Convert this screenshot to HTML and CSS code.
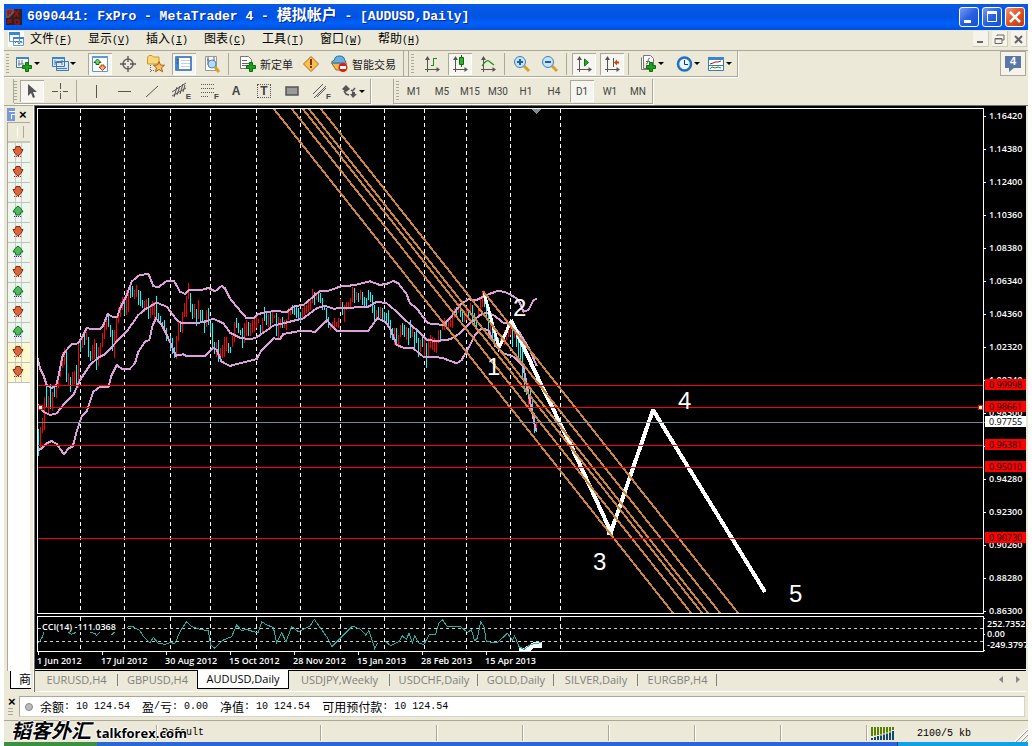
FILE: index.html
```html
<!DOCTYPE html>
<html lang="zh-CN">
<head>
<meta charset="utf-8">
<title>MetaTrader 4</title>
<link rel="stylesheet" href="styles.css">
</head>
<body>
<div class="window">
<header class="titlebar">
  <svg class="app-icon" width="16" height="16" viewBox="0 0 16 16"><path fill="#2a2222" d="M0 0h16v16H0z"/><path fill="#655" d="M0 0h8v4L3 9H0z"/><path stroke="#a01010" stroke-width="1.5" fill="none" d="M2 7V2h4M2 4h3M8 1l5 7M13 1L8 8M2 15v-4h3v2H2M9 15v-4h4v4H9"/></svg>
  <h1>6090441: FxPro - MetaTrader 4 - <span class="cjk">模拟帐户</span> - [AUDUSD,Daily]</h1>
  <div class="win-buttons">
    <button aria-label="最小化"><svg width="18" height="18" viewBox="0 0 18 18"><path fill="#fff" d="M4 12h7v3H4z"/></svg></button>
    <button aria-label="最大化"><svg width="18" height="18" viewBox="0 0 18 18"><path fill="none" stroke="#fff" d="M4.500 4.500h9v9h-9z"/><path fill="#fff" d="M4 3h10v3H4z"/></svg></button>
    <button class="close" aria-label="关闭"><svg width="18" height="18" viewBox="0 0 18 18"><path stroke="#fff" stroke-width="2.500" d="M4 4l10 10M14 4L4 14"/></svg></button>
  </div>
</header>
<nav class="menubar">
  <svg class="menu-icon" width="16" height="16" viewBox="0 0 16 16"><path fill="#fff" d="M0 0h16v16H0z"/><path fill="#fff" stroke="#5b9ad8" d="M1.500 2.500h10v8h-10zM5.500 6.500h10v8h-10z"/><path fill="#3c86cf" d="M1 1h11v3H1zM5 6h11v2H5z"/><path fill="none" stroke="#468" d="M7 12l2-2 2 3 2-3 1 2"/></svg>
  <button>文件<span>(<u>F</u>)</span></button><button>显示<span>(<u>V</u>)</span></button><button>插入<span>(<u>I</u>)</span></button><button>图表<span>(<u>C</u>)</span></button><button>工具<span>(<u>T</u>)</span></button><button>窗口<span>(<u>W</u>)</span></button><button>帮助<span>(<u>H</u>)</span></button>
  <div class="mdi-buttons">
    <button aria-label="最小化图表"><svg width="14" height="14" viewBox="0 0 14 14"><path fill="#666" d="M4 9h6v2H4z"/></svg></button>
    <button aria-label="还原图表"><svg width="14" height="14" viewBox="0 0 14 14"><path fill="none" stroke="#666" d="M5 4V3h7v5h-2M3 6.500h7v5H3zM3 7h7"/></svg></button>
    <button aria-label="关闭图表"><svg width="14" height="14" viewBox="0 0 14 14"><path stroke="#666" stroke-width="2" d="M4 4l7 7M11 4l-7 7"/></svg></button>
  </div>
</nav>

<div class="toolbar first">
  <div class="group">
    <i class="grip"></i>
    <button class="dd" aria-label="新图表"><svg width="17" height="18" viewBox="0 0 17 18"><path fill="#fff" stroke="#3978b5" d="M.5 2.500h12v10H.5z"/><path fill="#3c86cf" d="M0 2h13v2H0z"/><path stroke="#579" d="M3 5v6M2 9h6M6 5v4"/><path fill="#20a020" stroke="#087008" d="M9.500 7.500h3v3h3v3h-3v3h-3v-3h-3v-3h3z"/></svg></button>
    <button class="dd" aria-label="配置文件"><svg width="17" height="18" viewBox="0 0 17 18"><path fill="#d8e8f8" stroke="#3978b5" d="M4.500 6.500h12v9h-12zM.5 2.500h12v9H.5z"/><path fill="#3c86cf" d="M0 2h13v2H0z"/><path stroke="#579" d="M3 5v5M10 5v5M3 7.500h7M4 13.500h11"/></svg></button>
    <i class="gap"></i>
    <button class="tb on" aria-label="市场报价"><svg width="18" height="18" viewBox="0 0 18 18"><path fill="#fff" stroke="#5b9ad8" d="M1.500 1.500h15v15h-15z"/><path fill="#5b9ad8" d="M1 1h16v2H1z"/><path fill="#7fd07f" stroke="#087008" d="M6.500 4l3.500 3.500H8v2H5v-2H3z"/><path fill="#ffb070" stroke="#c03810" d="M11.500 15.500L15 12h-2v-2h-3v2H8z"/></svg></button>
    <button class="tb" aria-label="数据窗口"><svg width="18" height="18" viewBox="0 0 18 18"><circle cx="9" cy="9" r="5" fill="none" stroke="#666" stroke-width="1.500"/><path stroke="#555" stroke-width="1.300" d="M9 1v6M9 11v6M1 9h6M11 9h6"/></svg></button>
    <button class="tb" aria-label="导航"><svg width="18" height="18" viewBox="0 0 18 18"><path fill="#f8d878" stroke="#c89830" d="M.5 3.500V2L2 .5h3L6.500 2H12v7H.5z"/><path stroke="#666" stroke-dasharray="1 1" d="M3.500 10v7M4 15.500h4"/><path fill="#ffc060" stroke="#a06020" d="M12 6.500l1.500 3.500 4 .3-3 2.500 1 4L12 14.500l-3.500 2.300 1-4-3-2.500 4-.3z"/></svg></button>
    <button class="tb on" aria-label="终端"><svg width="18" height="18" viewBox="0 0 18 18"><path fill="#fff" stroke="#2860a8" stroke-width="1.500" d="M1 2h15v13H1z"/><path fill="#3c86cf" d="M1 2h3v13H1z"/><path stroke="#235" d="M2 5h1M2 8h1"/><path stroke="#b8d0f0" d="M6 5.500h9M6 8.500h9M6 11.500h9"/></svg></button>
    <button class="tb" aria-label="策略测试"><svg width="18" height="18" viewBox="0 0 18 18"><path fill="#fff" stroke="#999" d="M2.500 1.500h11v14h-11z"/><path stroke="#555" d="M5 2v8M4 5h2M11 2v5"/><circle cx="9" cy="9" r="4" fill="#b8daf5" stroke="#4888c0"/><path stroke="#d8a030" stroke-width="3" d="M12 12l4 5"/></svg></button>
    <i class="sep"></i>
    <button class="tb text" aria-label="新定单"><svg width="18" height="18" viewBox="0 0 18 18"><path fill="#fff" stroke="#777" d="M1.500 1.500h8l3 3v9h-11z"/><path stroke="#666" d="M3 5.500h5M3 8.500h7M3 10.500h5"/><path fill="#20a020" stroke="#087008" d="M10.500 7.500h3v3h3v3h-3v3h-3v-3h-3v-3h3z"/></svg>新定单</button>
    <button class="tb" aria-label="编辑器"><svg width="18" height="18" viewBox="0 0 18 18"><path fill="#f8c050" stroke="#b06820" d="M9 1.500L16.500 9 9 16.500 1.500 9z"/><path fill="#803010" d="M8 4h2v6H8zM8 11h2v2H8z"/></svg></button>
    <button class="tb text" aria-label="智能交易"><svg width="18" height="18" viewBox="0 0 18 18"><path fill="#f0b850" stroke="#a07020" d="M1.500 8h15L13 15H6z"/><path fill="#68aee0" stroke="#2870a8" d="M4.500 5q0-4 5-4t5 4q3 2 0 3h-10q-6 0 0-3z"/><circle cx="13" cy="12.500" r="4.500" fill="#d82010"/><path fill="#fff" d="M10 11h6v3h-6z"/></svg><span class="text-gap">智能交易</span></button>
    <i class="sep double"></i><i class="grip"></i>
    <button class="tb" aria-label="柱状图"><svg width="18" height="18" viewBox="0 0 18 18"><path class="axes" d="M4.500 3v14M2 14.500h14"/><path class="heads" d="M4.500 1l2.500 4H2zM17 14.500L13.500 12v5z"/><path class="crisp" stroke="#189018" d="M10.500 3v8M8 10.500h3M10 3.500h4"/></svg></button>
    <button class="tb on" aria-label="蜡烛图"><svg width="18" height="18" viewBox="0 0 18 18"><path class="axes" d="M4.500 3v14M2 14.500h14"/><path class="heads" d="M4.500 1l2.500 4H2zM17 14.500L13.500 12v5z"/><path stroke="#107010" d="M10.500 0v12"/><path fill="#30b030" stroke="#107010" d="M8.500 2.500h4v7h-4z"/></svg></button>
    <button class="tb" aria-label="折线图"><svg width="18" height="18" viewBox="0 0 18 18"><path class="axes" d="M4.500 3v14M2 14.500h14"/><path class="heads" d="M4.500 1l2.500 4H2zM17 14.500L13.500 12v5z"/><path fill="none" stroke="#189018" stroke-width="1.200" d="M3 11q5-8 8-4l4 3"/></svg></button>
    <i class="sep narrow"></i>
    <button class="tb" aria-label="放大"><svg width="18" height="18" viewBox="0 0 18 18"><path stroke="#d8a030" stroke-width="3" d="M11 11l5 5"/><circle cx="7" cy="7" r="5.500" fill="#c8e4fa" stroke="#3880c0"/><path stroke="#2060a0" stroke-width="2" d="M4 7h6M7 4v6"/></svg></button>
    <button class="tb" aria-label="缩小"><svg width="18" height="18" viewBox="0 0 18 18"><path stroke="#d8a030" stroke-width="3" d="M11 11l5 5"/><circle cx="7" cy="7" r="5.500" fill="#c8e4fa" stroke="#3880c0"/><path stroke="#2060a0" stroke-width="2" d="M4 7h6"/></svg></button>
    <i class="sep narrow"></i>
    <button class="tb on" aria-label="自动滚动"><svg width="18" height="18" viewBox="0 0 18 18"><path class="axes" d="M4.500 3v14M2 14.500h14"/><path class="heads" d="M4.500 1l2.500 4H2zM17 14.500L13.500 12v5z"/><path fill="#20b020" stroke="#107010" d="M9.500 4l4 3.500-4 3.500z"/></svg></button>
    <button class="tb on" aria-label="图表平移"><svg width="18" height="18" viewBox="0 0 18 18"><path class="axes" d="M4.500 3v14M2 14.500h14M10.500 3v9"/><path class="heads" d="M4.500 1l2.500 4H2zM17 14.500L13.500 12v5z"/><path fill="#c04010" d="M11 7.500l3-3v2h2v2h-2v2z"/></svg></button>
    <i class="sep narrow"></i><i class="gap"></i>
    <button class="dd" aria-label="指标"><svg width="17" height="18" viewBox="0 0 17 18"><path fill="#fff" stroke="#777" d="M3.500.500h7l3 3v10h-10zM1.500 2.500v12h9"/><path fill="none" stroke="#666" d="M6 9q2 0 2-3t2-3M6 6.500h4"/><path fill="#20a020" stroke="#087008" d="M9.500 7.500h3v3h3v3h-3v3h-3v-3h-3v-3h3z"/></svg></button>
    <button class="dd last" aria-label="周期"><svg width="17" height="18" viewBox="0 0 17 18"><circle cx="8.500" cy="9" r="6.500" fill="#e8f4ff" stroke="#2070c0" stroke-width="2.500"/><path fill="none" stroke="#235" d="M8.500 5v4.500H12"/></svg></button>
    <button class="dd last" aria-label="模板"><svg width="17" height="18" viewBox="0 0 17 18"><path fill="#fff" stroke="#3978b5" d="M.5 2.500h15v13H.5z"/><path fill="#3c86cf" d="M0 2h16v3H0z"/><path fill="none" stroke="#a02010" d="M2 9l3-1 2-1h3l3-1"/><path stroke="#3978b5" d="M1 10.500h14"/><path fill="none" stroke="#209020" d="M2 14l2-2 3 1 3-1 3 1"/></svg></button>
  </div>
  <button class="chat" aria-label="消息 4"><svg width="16" height="18" viewBox="0 0 16 18"><path fill="#5878a8" d="M0 1h16v12H9l-5 4v-4H0z"/></svg><b>4</b></button>
</div>

<div class="toolbar second">
  <i class="spacer"></i>
  <div class="group">
    <i class="grip short"></i>
    <button class="tb on" aria-label="光标"><svg width="18" height="18" viewBox="0 0 18 18"><path fill="#555" d="M5 2v12l3-3 2 5 2-1-2-5h4z"/></svg></button>
    <button class="tb" aria-label="十字准线"><svg width="18" height="18" viewBox="0 0 18 18"><path stroke="#555" d="M9.500 1v6M9.500 11v6M1 9.500h6M12 9.500h5M9 9.500h1"/></svg></button>
    <i class="sep"></i>
    <button class="tb" aria-label="垂直线"><svg width="18" height="18" viewBox="0 0 18 18"><path stroke="#555" d="M9.500 3v13"/></svg></button>
    <button class="tb" aria-label="水平线"><svg width="18" height="18" viewBox="0 0 18 18"><path stroke="#555" d="M3 9.500h13"/></svg></button>
    <button class="tb" aria-label="趋势线"><svg width="18" height="18" viewBox="0 0 18 18"><path stroke="#555" d="M3 15L15 4"/></svg></button>
    <button class="tb lettered" aria-label="等距通道"><svg width="18" height="18" viewBox="0 0 18 18"><path stroke="#555" d="M1 10L15 1M1 14L15 6M3 15l3-10M6 13l3-9M9 12l3-10M12 10l2-7"/></svg><small>E</small></button>
    <button class="tb lettered" aria-label="斐波那契"><svg width="18" height="18" viewBox="0 0 18 18"><path stroke="#555" stroke-dasharray="1 1" d="M2 2.500h14M2 6.500h14M2 10.500h14M2 14.500h8"/></svg><small>F</small></button>
    <button class="tb letter">A</button>
    <button class="tb letter boxed"><span>T</span></button>
    <button class="tb" aria-label="矩形"><svg width="18" height="18" viewBox="0 0 18 18"><path fill="#999" stroke="#555" stroke-width="1.500" d="M3 5h12v8H3z"/></svg></button>
    <button class="tb lettered" aria-label="斐波通道"><svg width="18" height="18" viewBox="0 0 18 18"><path stroke="#555" d="M2 12L12 2M3 16L15 4M6 15l9-9"/></svg><small>F</small></button>
    <i class="gap"></i>
    <button class="dd last" aria-label="箭头"><svg width="17" height="18" viewBox="0 0 17 18"><path fill="#555" d="M5 3l4 4-4 3-4-3zM12 16l4-4h-2v-2h-3v2H9z"/><path fill="none" stroke="#555" stroke-width="1.500" d="M10 8l1.500 1L14 6M3 9l2 3 3 1"/></svg></button>
  </div>
  <i class="divider"></i>
  <div class="group times">
    <i class="grip"></i>
    <button class="tb">M1</button><button class="tb">M5</button><button class="tb">M15</button><button class="tb">M30</button><button class="tb">H1</button><button class="tb">H4</button><button class="tb on">D1</button><button class="tb">W1</button><button class="tb">MN</button>
  </div>
</div>

<div class="workspace">
  <aside class="market">
    <div class="market-head"><svg width="8" height="13" viewBox="0 0 8 13"><path fill="#7898d8" d="M0 0h8v13H0z"/><path fill="none" stroke="#fff" d="M2 3.500h6M4.500 6v5M5 6.500h3"/></svg><button aria-label="关闭市场报价">×</button></div>
    <div class="market-list">
      <div class="market-cols"></div>
      <div class="quotes" id="quotes"></div>
    </div>
    <button class="market-tab">商</button>
  </aside>
  <main class="chart-column">
    <svg class="chart" viewBox="35 106 991 563" role="img" aria-label="AUDUSD,Daily">
      <path fill="#000" d="M35 106h991v563H35z"/>
      <g class="crisp" fill="none">
        <path stroke="#fff" stroke-dasharray="4 3" d="M80.500 109V613M124.500 109V613M170.500 109V613M210.500 109V613M256.500 109V613M300.500 109V613M340.500 109V613M384.500 109V613M424.500 109V613M466.500 109V613M510.500 109V613M560.500 109V613M80.500 617V651M124.500 617V651M170.500 617V651M210.500 617V651M256.500 617V651M300.500 617V651M340.500 617V651M384.500 617V651M424.500 617V651M466.500 617V651M510.500 617V651M560.500 617V651"/>
        <path stroke="#ccc" stroke-dasharray="3 3" d="M38 628.500H983M38 641.500H983"/>
        <g transform="translate(30 260) scale(.33333)">
          <path class="thin" id="up" stroke="#f00"/>
          <path class="thin" id="down" stroke="#0ff"/>
          <g class="bands">
            <path d="M22 292L30 325 40 345 50 375 65 384 78 378 85 350 97 290 105 275 125 253 145 250 160 225 170 205 208 208 218 200 233 162 250 172 262 170 270 145 290 105 305 65 325 47 355 41 370 78 385 82 410 63 432 63 450 95 465 102 478 90 515 90 535 84 555 94 575 78 585 85 600 115 620 140 650 175 670 175 685 162 710 156 735 153 770 156 795 138 820 135 850 110 870 93 890 94 930 80 975 75 1020 64 1050 75 1075 70 1090 63 1105 70 1130 103 1140 130 1160 145 1180 172 1195 190 1240 195 1260 175 1290 135 1315 118 1340 120 1370 105 1405 92 1430 98 1460 115 1470 130 1480 155 1495 150 1510 122 1520 115"/>
            <path d="M22 432L40 455 60 465 80 460 100 435 130 405 150 360 180 315 205 293 225 283 260 245 290 215 325 165 345 148 380 128 410 140 425 160 440 180 455 190 520 187 550 176 580 190 600 218 630 233 660 238 680 232 730 197 780 185 820 175 860 145 885 137 910 146 1015 140 1040 125 1070 130 1100 155 1120 175 1160 210 1190 240 1220 243 1260 238 1290 220 1320 190 1350 165 1370 158 1390 165 1420 188 1450 195 1470 220 1500 270 1520 318"/>
            <path d="M22 572L35 565 50 550 65 543 80 552 102 583 115 565 128 560 140 515 155 470 170 455 190 395 210 380 235 382 245 345 260 315 275 326 300 326 315 310 325 275 345 245 358 240 368 195 378 175 395 195 415 235 438 287 460 283 470 288 525 287 550 263 560 270 575 305 600 318 620 312 680 297 695 270 730 235 750 237 760 222 810 213 855 215 890 180 920 212 1015 212 1042 175 1065 185 1080 205 1100 255 1125 265 1150 265 1180 290 1235 293 1280 310 1295 300 1320 255 1335 225 1355 205 1375 210 1395 255 1420 280 1450 290 1480 320 1495 400 1515 500 1520 515"/>
          </g>
        </g>
        <path stroke="#fff" stroke-width="3" d="M484 293L492 322 499 348 511 321"/>
        <path stroke="#fff" stroke-width="4" stroke-linejoin="bevel" d="M511 320L538 378 574 452 611 532 653 410 765 592"/>
        <path stroke="#fff" stroke-width="4" d="M607 533h6"/>
        <path stroke="#cd853f" stroke-width="2" d="M274 109L673 613M292 109L691 613M303 109L702 613M309 109L708 613M321 109L720 613M483 291L738 613"/>
        <path stroke="#f00" d="M38 385.500H983M38 407.500H983M38 445.500H983M38 467.500H983M38 538.500H983"/>
        <path stroke="#778899" d="M38 422.500H985"/>
        <path fill="#fff" stroke="#f00" d="M38.500 405.500h4v4h-4zM978.500 405.500h4v4h-4z"/>
        <path fill="#fff" d="M519 648h5l10-6h8v6h-8l-4 3h-11z"/>
        <g transform="translate(0 600) scale(.33333)" stroke="#20b2aa">
          <path class="thin" d="M115 130L125 115 132 97M205 97L215 103 228 97M270 97L285 100 290 107 300 95M335 105L345 95M380 82L395 78 420 92 430 110 450 128 460 112 475 130 495 133 510 128 525 130 540 95 560 65 575 80 600 88 625 92 632 135 643 145 670 120 695 110 710 75 725 92 740 88 760 95 775 98 785 65 800 75 820 82 830 128 845 98 858 125 875 80 895 95 915 85 930 78 943 58 960 82 980 110 995 140 1015 120 1032 103 1057 78 1082 88 1097 105 1107 92 1124 145 1134 128M1154 122L1172 137 1197 125 1207 108 1219 118 1227 100 1237 130 1244 108 1257 130 1272 133 1287 105 1307 102 1317 68 1328 60 1342 80 1382 80 1402 97 1414 90 1424 122 1432 115 1442 65 1452 80 1459 125 1492 128 1522 100 1537 120 1544 108 1557 140 1572 148 1592 133 1622 128"/>
        </g>
        <path stroke="#fff" d="M37.500 108.500H983.500V613.500H37.500zM37.500 616.500H983.500V651.500H37.500zM984 116.500h2M984 149.500h2M984 182.500h2M984 215.500h2M984 248.500h2M984 281.500h2M984 314.500h2M984 347.500h2M984 380.500h2M984 413.500h2M984 446.500h2M984 479.500h2M984 512.500h2M984 545.500h2M984 578.500h2M984 611.500h2M984 618.500h1M984 634.500h1M984 650.500h1M38.500 652v3M102.500 652v3M166.500 652v3M230.500 652v3M294.500 652v3M358.500 652v3M422.500 652v3M486.500 652v3"/>
        <path fill="#808890" d="M532 109h9l-4.500 5z"/>
      </g>
      <g class="wave"><text x="487" y="375">1</text><text x="513" y="316">2</text><text x="593" y="570">3</text><text x="678" y="409">4</text><text x="789" y="602">5</text></g>
      <g class="axis">
        <text x="989" y="119">1.16420</text><text x="989" y="152">1.14380</text><text x="989" y="185">1.12400</text><text x="989" y="218">1.10360</text><text x="989" y="251">1.08380</text><text x="989" y="284">1.06340</text><text x="989" y="317">1.04360</text><text x="989" y="350">1.02320</text><text x="989" y="383">1.00340</text><text x="989" y="416">0.98300</text><text x="989" y="482">0.94280</text><text x="989" y="515">0.92300</text><text x="989" y="548">0.90260</text><text x="989" y="581">0.88280</text><text x="989" y="614">0.86300</text>
        <text x="987" y="627">252.7352</text><text x="987" y="637">0.00</text><text x="987" y="648">-249.3797</text>
        <text x="37" y="664">1 Jun 2012</text><text x="101" y="664">17 Jul 2012</text><text x="165" y="664">30 Aug 2012</text><text x="229" y="664">15 Oct 2012</text><text x="293" y="664">28 Nov 2012</text><text x="357" y="664">15 Jan 2013</text><text x="421" y="664">28 Feb 2013</text><text x="485" y="664">15 Apr 2013</text>
        <path fill="#000" d="M41 621h80v11H41z"/><text x="42" y="630">CCI(14) -111.0368</text>
      </g>
      <path fill="#f00" d="M985 379h41v11h-41zM985 401h41v11h-41zM985 439h41v11h-41zM985 461h41v11h-41zM985 532h41v11h-41z"/>
      <path fill="#fff" d="M985 416h41v11h-41z"/>
      <g class="axis tags"><text x="989" y="388">0.99998</text><text x="989" y="410">0.98661</text><text x="989" y="425">0.97755</text><text x="989" y="448">0.96381</text><text x="989" y="470">0.95010</text><text x="989" y="541">0.90730</text></g>
    </svg>
    <nav class="tabs">
      <button>EURUSD,H4</button><button>GBPUSD,H4</button><button class="active">AUDUSD,Daily</button><button>USDJPY,Weekly</button><button>USDCHF,Daily</button><button>GOLD,Daily</button><button>SILVER,Daily</button><button>EURGBP,H4</button>
      <span class="tab-scroll"><button aria-label="向左"><svg width="5" height="8" viewBox="0 0 5 8"><path fill="#888" d="M4 0v7L0 3.500z"/></svg></button><button aria-label="向右"><svg width="5" height="8" viewBox="0 0 5 8"><path fill="#888" d="M0 0v7l4-3.500z"/></svg></button></span>
    </nav>
  </main>
</div>

<section class="terminal">
  <div class="terminal-side"><button aria-label="关闭终端">×</button><i></i></div>
  <p><i class="dot"></i>余额<span>: 10 124.54&nbsp; </span>盈<span>/</span>亏<span>: 0.00&nbsp; </span>净值<span>: 10 124.54&nbsp; </span>可用预付款<span>: 10 124.54</span></p>
</section>

<footer class="status">
  <div class="help"><span class="brand"><em>韬客外汇</em>talkforex.com</span></div><div class="profile">Default</div><div class="wide"></div><div></div><div></div><div></div><div></div><div></div>
  <div class="net"><svg width="24" height="13" viewBox="0 0 24 13"><path stroke="#5a8000" stroke-width="2" d="M1 0v9M4 0v8.500M7 0v8M10 0v7.500M13 0v6.500M16 0v5.500M19 0v4.500M22 0v3"/><path stroke="#104870" stroke-width="2" d="M1 11v2M4 10v3M7 9v4M10 8.500V13M13 7.500V13M16 6.500V13M19 5.500V13M22 4v9"/></svg><span>2100/5 kb</span></div>
  <svg class="resize" width="14" height="14" viewBox="0 0 14 14"><path stroke="#fff" stroke-width="2" d="M1 14L14 1M6 14l8-8M11 14l3-3"/><path stroke="#999" d="M2 14L14 2M7 14l7-7M12 14l2-2"/></svg>
</footer>
<div class="taskbar"><i class="start"></i><i class="tasks"></i><i class="tray"></i></div>
</div>
<script src="chart.js"></script>
</body>
</html>
```

FILE: styles.css
```css
* { box-sizing: border-box; }
body { margin: 0; background: #fdfffc; font-family: "Liberation Sans", "Noto Sans CJK SC", sans-serif; font-size: 12px; color: #000; }
button { margin: 0; padding: 0; border: 0; background: none; font: inherit; color: inherit; }
svg { display: block; flex: none; }
i { font-style: normal; flex: none; }
.window { margin: 4px 4px 0; background: #ece9d8; }

.titlebar { display: flex; align-items: center; height: 26px; padding: 0 3px 0 2px; gap: 5px; background: linear-gradient(#0a5ae8, #0054e3 50%, #0060fc 75%, #0050d8); }
.titlebar h1 { flex: 1; margin: 0; color: #fff; font: bold 13px/20px "Liberation Mono", "Noto Sans CJK SC", monospace; text-shadow: 1px 1px #0a2a80; white-space: pre; }
.cjk { font-size: 15px; line-height: 1; }
.win-buttons { display: flex; gap: 3px; }
.win-buttons button { width: 20px; height: 20px; border: 1px solid #fff; border-radius: 3px; background: linear-gradient(135deg, #7a9cf0, #2860e0 50%, #1a50c8); }
.win-buttons .close { background: linear-gradient(135deg, #f09878, #e05020 50%, #c03c10); }

.menubar { display: flex; align-items: center; height: 21px; padding: 0 1px 2px 4px; border-bottom: 1px solid #aca899; font-family: "Liberation Sans", "Noto Sans CJK SC", sans-serif; }
.menu-icon { margin-right: 6px; }
.menubar > button { width: 58px; text-align: left; line-height: 18px; white-space: nowrap; }
.menubar > button span { font: 10px "Liberation Mono", monospace; }
.mdi-buttons { display: flex; gap: 3px; margin-left: auto; }
.mdi-buttons button { width: 16px; height: 16px; background: #f5f3ea; border-right: 1px solid #d0ccbc; border-bottom: 1px solid #d0ccbc; }

.toolbar { display: flex; }
.toolbar.first { height: 28px; justify-content: space-between; padding-right: 2px; }
.toolbar.second { height: 26px; }
.group { display: flex; align-items: center; border-right: 1px solid #aca899; border-bottom: 1px solid #aca899; box-shadow: 1px 1px #fff; height: 26px; }
.second .group { height: 25px; }
.grip { width: 9px; height: 20px; background: repeating-linear-gradient(#aca899 0 1px, #ece9d8 1px 3px) 2px 0 / 3px 20px no-repeat; }
.grip.short { width: 4px; background-position: 0 0; }
.times .grip { width: 6px; }
.gap { width: 4px; }
.first .gap { width: 1px; }
.tb { display: flex; align-items: center; justify-content: center; flex: none; width: 28px; height: 24px; border: 1px solid transparent; border-width: 1px 2px; color: #444; font-family: "Liberation Sans", "Noto Sans CJK SC", sans-serif; background-clip: padding-box; }
.tb.on { background-color: #f6f5ef; box-shadow: inset 1px 1px #aca899, inset -1px -1px #fff; }
.tb.text { width: auto; padding: 0 2px 0 3px; gap: 3px; font-size: 11px; color: #222; }
.text-gap { padding: 0 1px; }
.dd { display: flex; align-items: center; flex: none; width: 32px; height: 24px; padding-left: 3px; margin-right: 4px; }
.dd.last { margin-right: 0; }
.dd::after { content: ""; margin-left: 1px; border: 3px solid transparent; border-top-color: #000; border-bottom: 0; }
.sep { width: 6px; height: 22px; border-left: 1px solid #aca899; border-right: 1px solid transparent; margin-left: 2px; }
.sep.narrow { width: 4px; }
.sep.narrow + .gap { width: 5px; }
.sep.double { width: 6px; height: 25px; border-right-color: #aca899; margin-right: 0; }
.axes { fill: none; stroke: #555; shape-rendering: crispEdges; }
.heads { fill: #555; }
.spacer { width: 10px; border-right: 1px solid #aca899; margin: 0 0 2px; }
.divider { width: 23px; border-right: 1px solid #aca899; margin-bottom: 1px; }
.times .tb { font: 10px Roboto, sans-serif; }
.letter { font-weight: bold; }
.boxed span { border: 1px dotted #555; width: 14px; line-height: 12px; }
.lettered { position: relative; }
.lettered small { position: absolute; right: 1px; bottom: 1px; font: bold 8px "Liberation Sans", sans-serif; }
.chat { position: relative; width: 26px; height: 25px; padding-left: 4px; background: #f5f3ea; border: 1px solid #aca899; }
.chat b { position: absolute; left: 9px; top: 3px; color: #fff; font-size: 11px; }

.workspace { display: flex; }
.market { display: flex; flex-direction: column; flex: none; width: 30px; padding: 1px 3px 3px; border-top: 1px solid #aca899; border-right: 1px solid #fff; }
.market-head { display: flex; align-items: center; gap: 4px; height: 15px; }
.market-head button, .terminal-side button { font: bold 13px/12px "Liberation Sans", sans-serif; }
.market-list { flex: 1; border-top: 1px solid #aca899; border-left: 1px solid #aca899; background: #fff; }
.market-cols { height: 20px; border-bottom: 2px solid #cbc7b8; background: linear-gradient(#aca899, #aca899) 15px 3px / 1px 12px no-repeat, linear-gradient(#fff, #fff) 9px 3px / 1px 12px no-repeat, #ece9d8; }
.quote { height: 20px; padding: 2px 0 0 4px; border-bottom: 1px solid #c0c0c0; background: linear-gradient(#c8ccc8, #c8ccc8) 7px 0 / 1px 100% no-repeat, linear-gradient(#c8ccc8, #c8ccc8) 13px 0 / 1px 100% no-repeat, #edf7ee; }
.quote.new { background-color: #fffacd; }
.market-tab { height: 18px; margin: 0 -1px 0 3px; border: 1px solid #000; border-top: 0; border-right: 0; background: #fff; text-align: right; line-height: 14px; }
.chart-column { flex: 1; min-width: 0; padding-right: 2px; border-left: 1px solid #716f64; border-top: 1px solid #716f64; }
.chart { width: 100%; height: auto; }
.crisp { shape-rendering: crispEdges; }
.thin { vector-effect: non-scaling-stroke; stroke-width: 1px; }
.bands path { vector-effect: non-scaling-stroke; stroke: #dda0dd; stroke-width: 2px; }
.wave { fill: #fff; font: 24px "Liberation Sans", sans-serif; }
.axis { fill: #fff; font: 600 9px "Open Sans", sans-serif; }
.tags { fill: #000; font-weight: 400; }
.tabs { display: grid; grid-template-columns: 83px 79px 92px 101px 88px 76px 84px 79px 1fr; height: 22px; border-top: 1px solid #000; margin-top: 1px; padding-bottom: 2px; border-bottom: 1px solid #fff; color: #808080; font: 11px/18px "Open Sans", sans-serif; }
.tabs > button { background: linear-gradient(#808080, #808080) right 3px / 1px 12px no-repeat; white-space: nowrap; }
.tabs > button:nth-child(2) { background: none; }
.tabs > .active { margin-top: -1px; background: #fff; color: #000; border: 1px solid #000; border-top: 0; }
.tab-scroll { display: flex; justify-content: flex-end; align-items: center; gap: 12px; padding-right: 5px; }

.terminal { display: flex; height: 28px; padding: 4px 3px 3px 4px; }
.terminal-side { width: 11px; }
.terminal-side button { display: block; }
.terminal-side i { display: block; width: 5px; height: 8px; background: repeating-linear-gradient(#aca899 0 1px, transparent 1px 3px); }
.terminal p { flex: 1; display: flex; align-items: center; margin: 0; padding-left: 5px; background: #fff; border: 1px solid #aca899; border-color: #aca899 #d8d4c4 #d8d4c4 #aca899; white-space: pre; }
.terminal p span, .net, .profile { font-family: "Liberation Mono", monospace; font-size: 10px; }
.dot { width: 8px; height: 8px; margin-right: 7px; border-radius: 50%; border: 1px solid #888; background: #bbb; }

.status { position: relative; display: flex; height: 22px; padding-top: 4px; border-top: 1px solid #aca899; }
.status div { width: 86px; height: 16px; border-right: 1px solid #aca899; box-shadow: 1px 0 #fff; }
.status .help { width: 153px; }
.status .profile { width: 164px; padding-left: 5px; line-height: 15px; }
.status .wide { width: 116px; }
.status .net { display: flex; flex: 1; align-items: center; gap: 22px; border: 0; padding-left: 4px; box-shadow: none; }
.brand { position: absolute; left: 7px; top: -1px; z-index: 1; white-space: nowrap; font: bold 13px/20px "Open Sans", sans-serif; text-shadow: 1px 0 #fff, -1px 0 #fff, 0 1px #fff, 0 -1px #fff; }
.brand em { padding-right: 5px; font: italic bold 20px/20px "Noto Sans CJK SC", sans-serif; }
.resize { align-self: flex-end; }
.taskbar { display: flex; height: 4px; background: #2a66d8; }
.start { width: 93px; background: #3c9040; }
.tasks { flex: 1; }
.tray { width: 131px; background: #10a0e8; border-left: 1px solid #084880; }
```

FILE: chart.js
```js
// One entry per day: direction, high and low, in chart units.
const days = ("c507-588 r500-570 r474-520 r410-510 c378-440 r408-460 c372-447 r395-452 c380-412 r365-415 r340-383 r300-350 r275-325 r265-315 c272-365 r338-375 c350-395 r337-378 r333-373 c315-385 " +
"r248-385 c238-275 r228-263 c215-255 r215-240 c230-290 c272-303 r255-300 r237-298 c248-330 r262-318 r248-290 r220-262 r190-237 r165-210 c160-200 c195-230 c210-272 r210-293 r170-250 " +
"r145-190 r125-170 r112-150 c110-165 r90-165 r88-155 c80-115 c78-112 r90-117 r75-110 c90-135 c92-138 c120-145 r122-155 r118-150 c115-177 r140-175 r122-165 r125-180 c108-170 " +
"c160-190 c168-195 c185-208 c180-210 c205-243 r230-245 c228-270 c235-282 c262-295 r228-297 r180-243 c190-215 r155-218 r130-170 r108-170 r70-118 c100-155 c132-178 r132-173 c148-197 " +
"r120-178 c150-185 c150-188 c180-218 r150-200 c145-195 c190-220 c190-262 c245-282 r245-290 c240-305 r265-300 r255-295 r232-290 r230-272 c248-278 c262-278 r228-260 r185-245 c175-205 " +
"c190-218 c210-225 c205-263 r190-250 r180-228 c185-228 r190-228 r180-220 r175-215 r165-205 r178-190 c195-225 r175-215 c140-182 c152-195 r162-200 c155-200 r150-190 r165-175 c160-228 " +
"r170-235 r178-205 c170-203 r180-205 r178-210 r145-180 r140-165 c135-162 c140-165 c142-175 c145-180 c155-185 r145-180 r135-165 r135-160 r125-155 r115-150 r88-130 c95-135 r95-120 " +
"c100-125 c100-130 c115-150 c135-150 c145-190 c170-205 r190-210 r185-205 r175-200 r185-200 r175-205 r118-145 c125-165 r135-185 r125-150 r125-145 r115-140 r80-125 c85-130 r95-120 " +
"c100-125 r90-120 c95-135 c110-140 c115-145 c90-120 c95-125 c105-160 c135-180 r150-180 c140-175 r140-175 c145-180 c155-185 c160-195 c150-205 c180-235 c205-240 r205-255 c205-250 " +
"r225-265 r195-230 c190-225 c195-230 r200-240 c205-255 c180-235 r200-230 c215-265 c205-250 c235-290 r240-275 c230-260 r235-290 c250-323 r235-290 r225-265 r230-270 r235-275 r240-280 " +
"r210-250 c210-240 r190-210 r175-210 c180-205 r180-210 r175-200 r155-205 r145-175 c140-165 r130-160 c140-170 c150-185 r160-185 r150-180 c155-175 r130-165 c135-180 c160-195 c170-205 " +
"r140-175 r115-150 r92-140 c95-140 c115-170 c160-235 r180-215 c205-240 c220-260 c225-265 c235-270 r235-265 r225-250 r210-255 r205-240 r195-230 r185-225 c195-260 r210-235 c205-260 " +
"c210-300 c230-305 c250-350 c330-395 c355-405 r370-440 c385-440 c420-470 c460-520 r488-510").split(" ");

const bars = { r: "", c: "" };
days.forEach((day, i) => {
  const [high, low] = day.slice(1).split("-");
  bars[day[0]] += `M${25 + 6 * i} ${high}V${low}`;
});
document.getElementById("up").setAttribute("d", bars.r);
document.getElementById("down").setAttribute("d", bars.c);

const arrow = {
  d: '<path fill="#d86840" stroke="#982808" d="M4 1.500h4l1 3h2l-2 4-3 2.500-3-2.500-2-4h2z"/><path stroke="#f00" stroke-dasharray="1 1" d="M2 11.500h8"/>',
  u: '<path fill="#50b860" stroke="#107020" d="M6 1l3 2.500 2 3.500H9l-1 3H4L3 7H1l2-3.500z"/><path stroke="#60c" stroke-dasharray="1 1" d="M2 11.500h8"/>'
};
document.getElementById("quotes").innerHTML = [..."dddududududd"].map((dir, i) =>
  `<div class="quote${i > 9 ? " new" : ""}"><svg width="12" height="13" viewBox="0 0 12 13">${arrow[dir]}</svg></div>`
).join("");
```
